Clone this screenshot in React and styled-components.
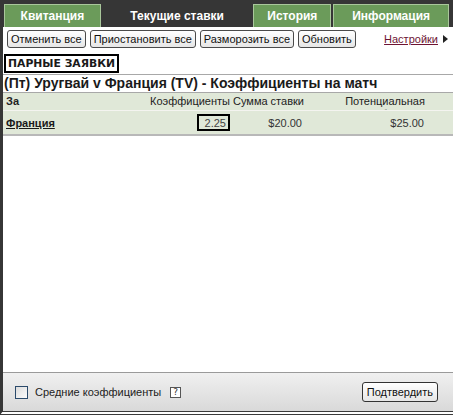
import React from "react";
import styled, { createGlobalStyle } from "styled-components";

const Global = createGlobalStyle`
  html, body { margin: 0; padding: 0; background: #fff; }
  body { font-family: "Liberation Sans", Arial, sans-serif; font-size: 11px; color: #1a1a1a; }
`;

const Frame = styled.div`
  width: 453px;
  height: 415px;
  box-sizing: border-box;
  display: flex;
  flex-direction: column;
  background: #fff;
  overflow: hidden;
`;

const Body = styled.div`
  flex: 1;
  display: flex;
  flex-direction: column;
  border-left: 3px solid #363636;
  border-bottom: 4px double #3a3a3a;
  min-height: 0;
`;

const TabBar = styled.div`
  display: flex;
  align-items: flex-end;
  gap: 2px;
  height: 27px;
  box-sizing: border-box;
  padding: 4px 4px 0 4px;
  background: #363636;
`;

const Tab = styled.div`
  width: ${(p) => p.w}px;
  height: 23px;
  box-sizing: border-box;
  display: flex;
  align-items: center;
  justify-content: center;
  font-family: "Liberation Sans", Arial, sans-serif;
  font-weight: bold;
  font-size: 12px;
  color: #fff;
  background: ${(p) => (p.active ? "#363636" : "#6b9b5a")};
  border: 1px solid ${(p) => (p.active ? "#363636" : "#a9c79b")};
  border-bottom: none;
`;

const Toolbar = styled.div`
  display: flex;
  align-items: center;
  gap: 4px;
  padding: 2px 0 0 4px;
  height: 20px;
`;

const Btn = styled.button`
  height: 18px;
  box-sizing: border-box;
  padding: 0 3px;
  margin: 0;
  white-space: nowrap;
  font-family: "Liberation Sans", Arial, sans-serif;
  font-size: 11px;
  color: #111;
  border: 1px solid #4a4a4a;
  border-radius: 3px;
  background: linear-gradient(#ffffff, #e6e6e6);
  line-height: 15px;
`;

const SettingsLink = styled.a`
  margin-left: auto;
  margin-right: 5px;
  display: flex;
  align-items: center;
  gap: 5px;
  white-space: nowrap;
  font-family: "Liberation Sans", Arial, sans-serif;
  font-size: 11px;
  color: #6e1433;
  text-decoration: underline;
`;

const Tri = styled.span`
  width: 0;
  height: 0;
  border-top: 4px solid transparent;
  border-bottom: 4px solid transparent;
  border-left: 5px solid #222;
`;

const SectionBox = styled.div`
  align-self: flex-start;
  margin: 5px 0 0 1px;
  padding: 0 2px;
  height: 19px;
  box-sizing: border-box;
  border: 2px solid #000;
  font-family: "DejaVu Sans", sans-serif;
  font-size: 10.8px;
  font-weight: bold;
  line-height: 15px;
  white-space: nowrap;
  color: #1a1a1a;
`;

const MatchTitle = styled.div`
  margin-top: 1px;
  border-top: 1px solid #a8a8a8;
  border-bottom: 1px solid #a8a8a8;
  height: 19px;
  box-sizing: border-box;
  padding-left: 1px;
  font-family: "Liberation Sans", Arial, sans-serif;
  font-weight: bold;
  font-size: 14px;
  line-height: 17px;
  white-space: nowrap;
  color: #1a1a1a;
`;

const Table = styled.div`
  display: grid;
  grid-template-columns: 147px 83px 78px 32px 84px 1fr;
  background: #e0e8d8;
  border-bottom: 2px solid #b8b8b8;
`;

const HeadCell = styled.div`
  height: 17px;
  overflow: hidden;
  padding-top: 2px;
  box-sizing: border-box;
  font-family: "Liberation Sans", Arial, sans-serif;
  font-size: 11px;
  line-height: 13px;
  color: #222;
  text-align: ${(p) => p.align || "left"};
  font-weight: ${(p) => (p.bold ? "bold" : "normal")};
  padding-left: ${(p) => p.pl || 0}px;
  padding-right: ${(p) => p.pr || 0}px;
  white-space: ${(p) => (p.wrap ? "normal" : "nowrap")};
`;

const Cell = styled.div`
  height: 23px;
  display: flex;
  align-items: center;
  justify-content: ${(p) => p.justify || "flex-start"};
  font-family: "Liberation Sans", Arial, sans-serif;
  font-size: 11px;
  color: #333;
  padding-left: ${(p) => p.pl || 0}px;
  padding-right: ${(p) => p.pr || 0}px;
  border-top: 1px solid #f4f4f0;
`;

const TeamLink = styled.a`
  font-family: "Liberation Sans", Arial, sans-serif;
  font-size: 11px;
  font-weight: bold;
  color: #1a1a1a;
  text-decoration: underline;
`;

const OddsBox = styled.span`
  width: 33px;
  height: 17px;
  box-sizing: border-box;
  border: 2px solid #000;
  display: flex;
  align-items: center;
  justify-content: flex-end;
  padding-right: 2px;
  color: #444;
  background: #e0e8d8;
`;

const Spacer = styled.div`
  flex: 1;
`;

const Footer = styled.div`
  height: 39px;
  box-sizing: border-box;
  border-top: 1px solid #9a9a9a;
  background: linear-gradient(#f0f0f0, #d9d9d9);
  display: flex;
  align-items: center;
  padding: 0 12px 0 12px;
`;

const Check = styled.span`
  width: 13px;
  height: 13px;
  box-sizing: border-box;
  border: 1px solid #2b4a6b;
  background: linear-gradient(135deg, #dcdcdc, #fbfbfb);
  margin-right: 7px;
`;

const CheckLabel = styled.span`
  font-family: "Liberation Sans", Arial, sans-serif;
  font-size: 11px;
  color: #222;
`;

const Help = styled.span`
  width: 11px;
  height: 11px;
  box-sizing: border-box;
  border: 1px solid #555;
  margin-left: 9px;
  display: flex;
  align-items: center;
  justify-content: center;
  font-family: "DejaVu Sans", sans-serif;
  font-size: 9px;
  line-height: 9px;
  color: #333;
  background: #fff;
`;

const Confirm = styled(Btn)`
  margin-left: auto;
  margin-right: 3px;
  height: 20px;
  padding: 0 4px;
  border-color: #333;
`;

export default function App() {
  return (
    <>
      <Global />
      <Frame>
        <TabBar>
          <Tab w={97}>Квитанция</Tab>
          <Tab w={149} active>
            Текущие ставки
          </Tab>
          <Tab w={78}>История</Tab>
          <Tab w={116}>Информация</Tab>
        </TabBar>
        <Body>
          <Toolbar>
            <Btn>Отменить все</Btn>
            <Btn>Приостановить все</Btn>
            <Btn>Разморозить все</Btn>
            <Btn>Обновить</Btn>
            <SettingsLink>
              Настройки <Tri />
            </SettingsLink>
          </Toolbar>
          <SectionBox>ПАРНЫЕ ЗАЯВКИ</SectionBox>
          <MatchTitle>(Пт) Уругвай v Франция (TV) - Коэффициенты на матч</MatchTitle>
          <Table>
            <HeadCell bold pl={3}>
              За
            </HeadCell>
            <HeadCell align="right" pr={5}>
              Коэффициенты
            </HeadCell>
            <HeadCell>Сумма ставки</HeadCell>
            <HeadCell />
            <HeadCell align="center" wrap>
              Потенциальная прибыль
            </HeadCell>
            <HeadCell />
            <Cell pl={3}>
              <TeamLink>Франция</TeamLink>
            </Cell>
            <Cell justify="flex-end" pr={3}>
              <OddsBox>2.25</OddsBox>
            </Cell>
            <Cell justify="flex-end" pr={9}>
              $20.00
            </Cell>
            <Cell />
            <Cell justify="flex-end" pr={3}>
              $25.00
            </Cell>
            <Cell />
          </Table>
          <Spacer />
          <Footer>
            <Check />
            <CheckLabel>Средние коэффициенты</CheckLabel>
            <Help>?</Help>
            <Confirm>Подтвердить</Confirm>
          </Footer>
        </Body>
      </Frame>
    </>
  );
}
